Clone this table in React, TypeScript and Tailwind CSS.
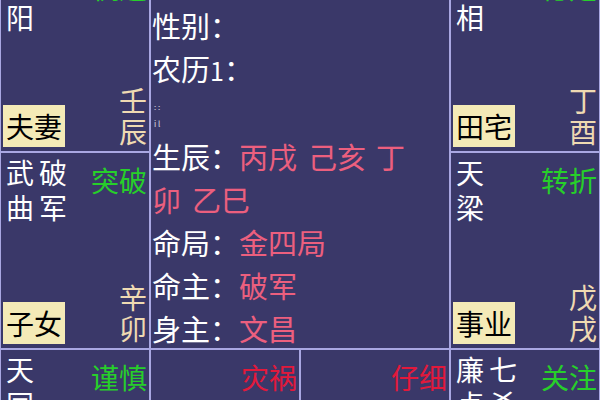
type Palace = {
  stars: string[];
  note?: string;
  noteColor?: string;
  noteTop?: string;
  label?: string;
  stem?: string;
};

const green = "text-[#27cf2a]";
const red = "text-[#e2193b]";

function VerticalText({ text, className }: { text: string; className: string }) {
  return (
    <div className={`flex flex-col ${className}`}>
      {[...text].map((ch, i) => (
        <span key={i}>{ch}</span>
      ))}
    </div>
  );
}

function PalaceCell({ stars, note, noteColor = green, noteTop = "mt-[8px]", label, stem }: Palace) {
  return (
    <div className="flex flex-col justify-between overflow-hidden border border-[#a9a7e2] p-[2px]">
      <div className="flex items-start justify-between">
        <div className="flex gap-[5px] pl-[3px] text-[28px] leading-[35px] text-white">
          {stars.map((star) => (
            <VerticalText key={star} text={star} className="" />
          ))}
        </div>
        {note && <span className={`text-[28px] leading-[35px] ${noteTop} ${noteColor}`}>{note}</span>}
      </div>
      {(label || stem) && (
        <div className="mb-[2px] flex items-end justify-between">
          {label ? (
            <span className="bg-[#f4eab7] px-[3px] text-[28px] leading-[42px] text-black">{label}</span>
          ) : (
            <span />
          )}
          {stem && <VerticalText text={stem} className="text-[28px] leading-[31px] text-[#efdab2]" />}
        </div>
      )}
    </div>
  );
}

function InfoPanel() {
  const value = "text-[#ec5f7e]";
  return (
    <div className="col-span-2 row-span-2 border border-[#a9a7e2] pl-px pt-[41px] text-[29px] leading-[43px] text-white">
      <div>性别：</div>
      <div>
        农历<span className="text-[25px]">1</span>：
      </div>
      <div className="h-[43px] pl-[2px] pt-[6px] text-[8px] leading-[17px] text-white/80">
        <div>:&nbsp;:</div>
        <div>i&nbsp;l</div>
      </div>
      <div>
        生辰：
        <span className={value}>
          <span className="mr-[11px]">丙戌</span>
          <span className="mr-[10px]">己亥</span>丁
        </span>
      </div>
      <div className={value}>
        <span className="mr-[11px]">卯</span>乙巳
      </div>
      <div>
        命局：<span className={value}>金四局</span>
      </div>
      <div>
        命主：<span className={value}>破军</span>
      </div>
      <div>
        身主：<span className={value}>文昌</span>
      </div>
    </div>
  );
}

export default function App() {
  return (
    <div className="h-[400px] w-[600px] overflow-hidden bg-[#3a3869] font-[Noto_Sans_CJK_SC,sans-serif]">
      <div className="-mt-[38px] grid grid-cols-[150px_150px_150px_150px] grid-rows-[190px_197px_200px]">
        <PalaceCell stars={["太阳"]} note="机遇" noteTop="mt-[5px]" label="夫妻" stem="壬辰" />
        <InfoPanel />
        <PalaceCell stars={["天相"]} note="稳定" noteTop="mt-[5px]" label="田宅" stem="丁酉" />
        <PalaceCell stars={["武曲", "破军"]} note="突破" label="子女" stem="辛卯" />
        <PalaceCell stars={["天梁"]} note="转折" label="事业" stem="戊戌" />
        <PalaceCell stars={["天同"]} note="谨慎" />
        <PalaceCell stars={[]} note="灾祸" noteColor={red} />
        <PalaceCell stars={[]} note="仔细" noteColor={red} />
        <PalaceCell stars={["廉贞", "七杀"]} note="关注" />
      </div>
    </div>
  );
}
